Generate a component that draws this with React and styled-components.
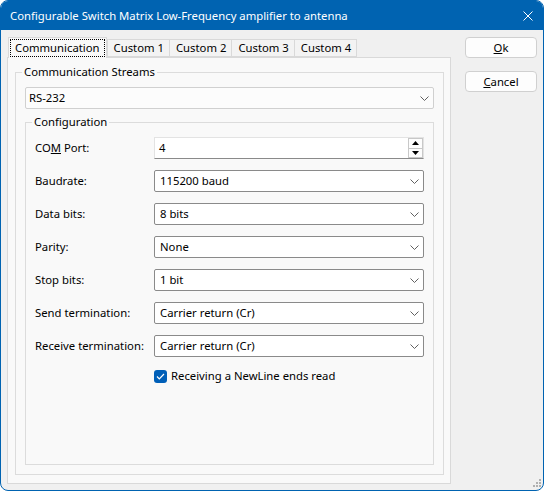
import React from "react";
import styled, { createGlobalStyle } from "styled-components";

const GlobalStyle = createGlobalStyle`
  html, body {
    margin: 0;
    padding: 0;
    background: #ffffff;
  }
  body {
    font-family: "Noto Sans", "Segoe UI", sans-serif;
    font-size: 11.3px;
    color: #000;
  }
`;

const Window = styled.div`
  position: relative;
  width: 544px;
  height: 491px;
  box-sizing: border-box;
  border: 1px solid #0063b1;
  border-radius: 8px;
  overflow: hidden;
  display: flex;
  flex-direction: column;
  background: #f0f0f0;
`;

const TitleBar = styled.div`
  flex-shrink: 0;
  height: 29px;
  background: #0063b1;
  color: #fff;
  display: flex;
  align-items: center;
  justify-content: space-between;
  padding: 0 10px 0 9px;
`;

const Title = styled.span`
  line-height: 16px;
`;

const Body = styled.div`
  flex: 1;
  display: flex;
  gap: 14px;
  padding: 7px 5px 6px 6px;
  min-height: 0;
`;

const LeftCol = styled.div`
  width: 444px;
  display: flex;
  flex-direction: column;
`;

const TabRow = styled.div`
  height: 20px;
  display: flex;
  align-items: flex-end;
  padding-left: 1px;
`;

const Tab = styled.div`
  position: relative;
  box-sizing: border-box;
  height: ${(p) => (p.$active ? "21px" : "18px")};
  margin-bottom: ${(p) => (p.$active ? "-1px" : "0")};
  z-index: ${(p) => (p.$active ? 1 : 0)};
  padding: ${(p) => (p.$active ? "1px" : "0 5px 0 6px")};
  border: 1px solid #d9d9d9;
  border-bottom: ${(p) => (p.$active ? "none" : "1px solid #d9d9d9")};
  border-left: ${(p) => (p.$active || p.$first ? "1px solid #d9d9d9" : "none")};
  background: ${(p) => (p.$active ? "#f9f9f9" : "#f3f3f3")};
  display: flex;
  align-items: center;
  line-height: 16px;
  white-space: nowrap;
`;

const Focus = styled.span`
  display: flex;
  align-items: center;
  height: 100%;
  box-sizing: border-box;
  padding: 0 5px 1px 5px;
  outline: 1px dotted #000;
  outline-offset: -1px;
`;

const Panel = styled.div`
  flex: 1;
  display: flex;
  flex-direction: column;
  border: 1px solid #d9d9d9;
  background: #f9f9f9;
  padding: 6px 6px 8px 7px;
  min-height: 0;
`;

const Group = styled.fieldset`
  flex: 1;
  display: flex;
  flex-direction: column;
  margin: ${(p) => (p.$inner ? "5px 0 0 0" : "0")};
  border: 1px solid #dcdcdc;
  padding: 7px 9px 9px 9px;
  min-width: 0;
`;

const Legend = styled.legend`
  padding: 0 2px;
  margin-left: -3px;
  line-height: 16px;
`;

const Combo = styled.div`
  box-sizing: border-box;
  height: 22px;
  display: flex;
  align-items: center;
  justify-content: space-between;
  border: 1px solid ${(p) => (p.$flat ? "#d0d0d0" : "#8a8a8a")};
  border-radius: 2px;
  background: ${(p) => (p.$flat ? "#fcfcfc" : "#ffffff")};
  padding: ${(p) => (p.$flat ? "0 4px 0 3px" : "0 4px 0 5px")};
  line-height: 16px;
`;

const Chevron = () => (
  <svg width="9" height="5" viewBox="0 0 9 5">
    <polyline points="0.5,0.5 4.5,4.5 8.5,0.5" fill="none" stroke="#606060" strokeWidth="1" />
  </svg>
);

const Form = styled.div`
  display: grid;
  grid-template-columns: 119px 1fr;
  row-gap: 11px;
  align-items: center;
`;

const Label = styled.div`
  line-height: 16px;
`;

const SpinEdit = styled.div`
  box-sizing: border-box;
  height: 22px;
  display: flex;
  align-items: stretch;
  border: 1px solid #e3e3e3;
  border-bottom-color: #8a8a8a;
  background: #ffffff;
`;

const SpinText = styled.div`
  flex: 1;
  display: flex;
  align-items: center;
  padding-left: 4px;
  line-height: 16px;
`;

const SpinButtons = styled.div`
  width: 15px;
  display: flex;
  flex-direction: column;
`;

const SpinButton = styled.div`
  flex: 1;
  display: flex;
  align-items: center;
  justify-content: center;
  box-sizing: border-box;
  border: 1px solid #c8c8c8;
  border-top: ${(p) => (p.$down ? "none" : "1px solid #c8c8c8")};
  background: #fdfdfd;
`;

const CheckRow = styled.label`
  grid-column: 2;
  height: 16px;
  display: flex;
  align-items: center;
  gap: 4px;
  line-height: 16px;
`;

const CheckBox = styled.span`
  width: 13px;
  height: 13px;
  border-radius: 3px;
  background: #005fb8;
  display: flex;
  align-items: center;
  justify-content: center;
`;

const RightCol = styled.div`
  width: 72px;
  display: flex;
  flex-direction: column;
  gap: 13px;
`;

const Button = styled.div`
  box-sizing: border-box;
  height: 21px;
  border: 1px solid #d0d0d0;
  border-radius: 4px;
  background: #fdfdfd;
  display: flex;
  align-items: center;
  justify-content: center;
  line-height: 16px;
`;

const Grip = styled.svg`
  position: absolute;
  right: 2px;
  bottom: 2px;
`;

const rows = [
  { label: "Baudrate:", value: "115200 baud" },
  { label: "Data bits:", value: "8 bits" },
  { label: "Parity:", value: "None" },
  { label: "Stop bits:", value: "1 bit" },
  { label: "Send termination:", value: "Carrier return (Cr)" },
  { label: "Receive termination:", value: "Carrier return (Cr)" },
];

const tabs = ["Communication", "Custom 1", "Custom 2", "Custom 3", "Custom 4"];

export default function App() {
  return (
    <>
      <GlobalStyle />
      <Window>
        <TitleBar>
          <Title>Configurable Switch Matrix Low-Frequency amplifier to antenna</Title>
          <svg width="10" height="10" viewBox="0 0 10 10">
            <path d="M0.5 0.5 L9.5 9.5 M9.5 0.5 L0.5 9.5" stroke="#fff" strokeWidth="1" />
          </svg>
        </TitleBar>
        <Body>
          <LeftCol>
            <TabRow>
              {tabs.map((t, i) => (
                <Tab key={t} $active={i === 0} $first={i === 1}>
                  {i === 0 ? <Focus>{t}</Focus> : t}
                </Tab>
              ))}
            </TabRow>
            <Panel>
              <Group>
                <Legend>Communication Streams</Legend>
                <Combo $flat>
                  <span>RS-232</span>
                  <Chevron />
                </Combo>
                <Group $inner>
                  <Legend>Configuration</Legend>
                  <Form>
                    <Label>
                      CO<u>M</u> Port:
                    </Label>
                    <SpinEdit>
                      <SpinText>4</SpinText>
                      <SpinButtons>
                        <SpinButton>
                          <svg width="7" height="4" viewBox="0 0 7 4">
                            <polygon points="0,4 3.5,0 7,4" fill="#000" />
                          </svg>
                        </SpinButton>
                        <SpinButton $down>
                          <svg width="7" height="4" viewBox="0 0 7 4">
                            <polygon points="0,0 3.5,4 7,0" fill="#000" />
                          </svg>
                        </SpinButton>
                      </SpinButtons>
                    </SpinEdit>
                    {rows.map((r) => (
                      <React.Fragment key={r.label}>
                        <Label>{r.label}</Label>
                        <Combo>
                          <span>{r.value}</span>
                          <Chevron />
                        </Combo>
                      </React.Fragment>
                    ))}
                    <CheckRow>
                      <CheckBox>
                        <svg width="9" height="7" viewBox="0 0 9 7">
                          <polyline points="1,3.5 3.3,5.8 8,1" fill="none" stroke="#fff" strokeWidth="1.2" />
                        </svg>
                      </CheckBox>
                      Receiving a NewLine ends read
                    </CheckRow>
                  </Form>
                </Group>
              </Group>
            </Panel>
          </LeftCol>
          <RightCol>
            <Button>
              <span>
                <u>O</u>k
              </span>
            </Button>
            <Button>
              <span>
                <u>C</u>ancel
              </span>
            </Button>
          </RightCol>
        </Body>
        <Grip width="9" height="9" viewBox="0 0 9 9">
          <rect x="7" y="0" width="2" height="2" fill="#b0b0b0" />
          <rect x="4" y="3" width="2" height="2" fill="#b0b0b0" />
          <rect x="7" y="3" width="2" height="2" fill="#b0b0b0" />
          <rect x="1" y="6" width="2" height="2" fill="#b0b0b0" />
          <rect x="4" y="6" width="2" height="2" fill="#b0b0b0" />
          <rect x="7" y="6" width="2" height="2" fill="#b0b0b0" />
        </Grip>
      </Window>
    </>
  );
}
